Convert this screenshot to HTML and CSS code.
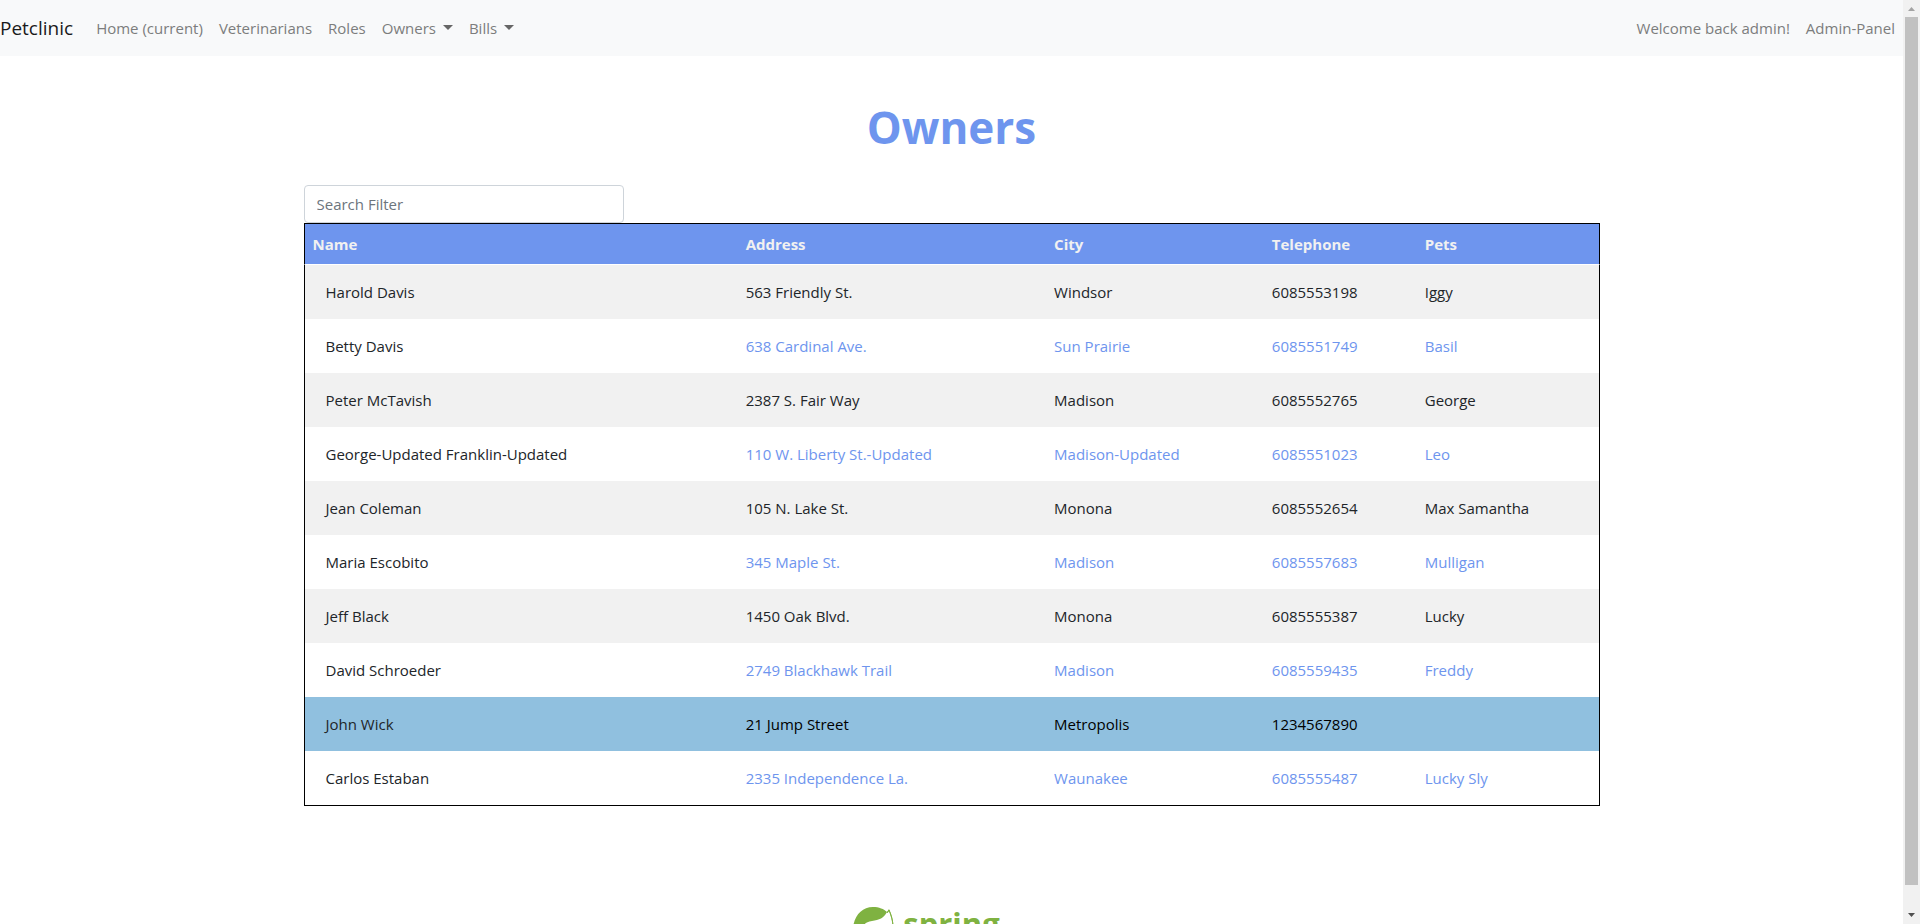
FILE: index.html
```html
<!DOCTYPE html>
<html lang="en">
<head>
<meta charset="utf-8">
<title>Petclinic - Owners</title>
<link rel="stylesheet" href="styles.css">
</head>
<body>
<div class="page">
  <nav class="navbar">
    <a class="brand" href="#">Petclinic</a>
    <div class="nav-group">
      <a class="nav-link" href="#">Home (current)</a>
      <a class="nav-link" href="#">Veterinarians</a>
      <a class="nav-link" href="#">Roles</a>
      <a class="nav-link dropdown" href="#">Owners</a>
      <a class="nav-link dropdown" href="#">Bills</a>
    </div>
    <div class="nav-group nav-end">
      <a class="nav-link" href="#">Welcome back admin!</a>
      <a class="nav-link" href="#">Admin-Panel</a>
    </div>
  </nav>
  <main class="container">
    <h1 class="title">Owners</h1>
    <input class="search" type="text" placeholder="Search Filter" aria-label="Search Filter">
    <table class="owners">
      <colgroup><col class="col-name"><col class="col-address"><col class="col-city"><col class="col-phone"><col class="col-pets"></colgroup>
      <thead>
        <tr><th>Name</th><th>Address</th><th>City</th><th>Telephone</th><th>Pets</th></tr>
      </thead>
      <tbody>
        <tr><td><a class="owner" href="#">Harold Davis</a></td><td>563 Friendly St.</td><td>Windsor</td><td>6085553198</td><td>Iggy</td></tr>
        <tr><td><a class="owner" href="#">Betty Davis</a></td><td>638 Cardinal Ave.</td><td>Sun Prairie</td><td>6085551749</td><td>Basil</td></tr>
        <tr><td><a class="owner" href="#">Peter McTavish</a></td><td>2387 S. Fair Way</td><td>Madison</td><td>6085552765</td><td>George</td></tr>
        <tr><td><a class="owner" href="#">George-Updated Franklin-Updated</a></td><td>110 W. Liberty St.-Updated</td><td>Madison-Updated</td><td>6085551023</td><td>Leo</td></tr>
        <tr><td><a class="owner" href="#">Jean Coleman</a></td><td>105 N. Lake St.</td><td>Monona</td><td>6085552654</td><td>Max Samantha</td></tr>
        <tr><td><a class="owner" href="#">Maria Escobito</a></td><td>345 Maple St.</td><td>Madison</td><td>6085557683</td><td>Mulligan</td></tr>
        <tr><td><a class="owner" href="#">Jeff Black</a></td><td>1450 Oak Blvd.</td><td>Monona</td><td>6085555387</td><td>Lucky</td></tr>
        <tr><td><a class="owner" href="#">David Schroeder</a></td><td>2749 Blackhawk Trail</td><td>Madison</td><td>6085559435</td><td>Freddy</td></tr>
        <tr class="active"><td><a class="owner" href="#">John Wick</a></td><td>21 Jump Street</td><td>Metropolis</td><td>1234567890</td><td></td></tr>
        <tr><td><a class="owner" href="#">Carlos Estaban</a></td><td>2335 Independence La.</td><td>Waunakee</td><td>6085555487</td><td>Lucky Sly</td></tr>
      </tbody>
    </table>
  </main>
  <footer class="footer">
    <svg class="leaf" width="42" height="42" viewBox="0 0 42 42" aria-hidden="true">
      <path fill="#7fb241" d="M0 20C2 8 9 0 20 0c6 0 11 2 14 5-3 6-8 8-15 9-6 1-8 3-9 6-1 5 1 9 5 11 9 3 19 0 22-8 2-6 1-10-1-16l-2-2 2-3c4 8 5 15 4 22-2 10-10 17-20 17C8 41-1 32 0 20z"/>
      <path fill="#fff" d="M34 7l2-3c3 7 4 13 3 18-1-5-2-10-5-15z"/>
      <path fill="none" stroke="#7fb241" d="M34 6l2-3c2 5 4 11 4 17"/>
    </svg>
    <span class="logo-text">spring</span>
  </footer>
</div>
<div class="scrollbar" aria-hidden="true">
  <svg class="arrow" width="17" height="17" viewBox="0 0 17 17"><path fill="#a3a3a3" d="M5 11l3.500-4L12 11z"/></svg>
  <div class="track"><div class="thumb"></div></div>
  <svg class="arrow" width="17" height="17" viewBox="0 0 17 17"><path fill="#505050" d="M5 6l3.500 4L12 6z"/></svg>
</div>
</body>
</html>
```
FILE: styles.css
```css
* { box-sizing: border-box; }
body {
  margin: 0;
  height: 100vh;
  display: flex;
  overflow: hidden;
  background: #fff;
  color: #212529;
  font: 15px/24px "Open Sans", sans-serif;
}
a { text-decoration: none; }
.page { flex: 1; min-width: 0; overflow: hidden; }
.navbar {
  display: flex;
  align-items: center;
  padding: 8px 0;
  background: #f8f9fa;
}
.brand { margin-right: 15px; padding: 5px 0; font-size: 19px; line-height: 30px; color: #1a1a1a; }
.nav-group { display: flex; }
.nav-end { margin-left: auto; }
.nav-link { padding: 8px; color: #7c7d7d; }
.dropdown::after {
  content: "";
  display: inline-block;
  margin-left: 7px;
  vertical-align: 4px;
  border: 5px solid transparent;
  border-top-color: #666;
  border-bottom: 0;
}
.container { width: 90%; max-width: 1296px; margin: 0 auto; padding-top: 42px; }
.title {
  margin: 0 0 29px;
  text-align: center;
  font-size: 44px;
  line-height: 58px;
  font-weight: 700;
  color: #6e95ee;
}
.search {
  display: block;
  width: 320px;
  height: 38px;
  padding: 6px 12px;
  border: 1px solid #ced4da;
  border-radius: 4px;
  background: #fff;
  font: inherit;
}
.search::placeholder { color: #6c757d; opacity: 1; }
.owners { width: 100%; table-layout: fixed; border-collapse: separate; border-spacing: 0; }
.col-name { width: 33.5%; }
.col-address { width: 23.8%; }
.col-city { width: 16.8%; }
.col-phone { width: 11.8%; }
.owners th, .owners td { padding: 8px; text-align: left; }
.owners th {
  background: #6e95ee padding-box;
  color: #f1f1f1;
  border-top: 1px solid #000;
  border-bottom: 1px solid transparent;
}
.owners td { padding: 15px 8px; height: 54px; color: #6e95ee; }
.owners tr > :first-child { border-left: 1px solid #000; }
.owners tr > :last-child { border-right: 1px solid #000; }
.owners tbody tr:last-child td { border-bottom: 1px solid #000; height: 55px; }
.owners tbody tr:nth-child(odd) { background: #f1f1f1; }
.owners tbody tr:nth-child(odd) td { color: #212529; }
.owners tbody tr.active { background: #90c0df; }
.owners tbody tr.active td { color: #000; }
.owner { padding: 0 13px; color: #212529; }
.footer { display: flex; justify-content: center; gap: 8px; padding: 101px 50px 0 0; }
.logo-text { font: 700 31px/32px "Open Sans", sans-serif; color: #7fb241; }
.scrollbar { width: 17px; display: flex; flex-direction: column; background: #f1f1f1; }
.arrow { display: block; }
.track { flex: 1; padding: 0 2px; }
.thumb { height: 97.5%; background: #c1c1c1; }
```
